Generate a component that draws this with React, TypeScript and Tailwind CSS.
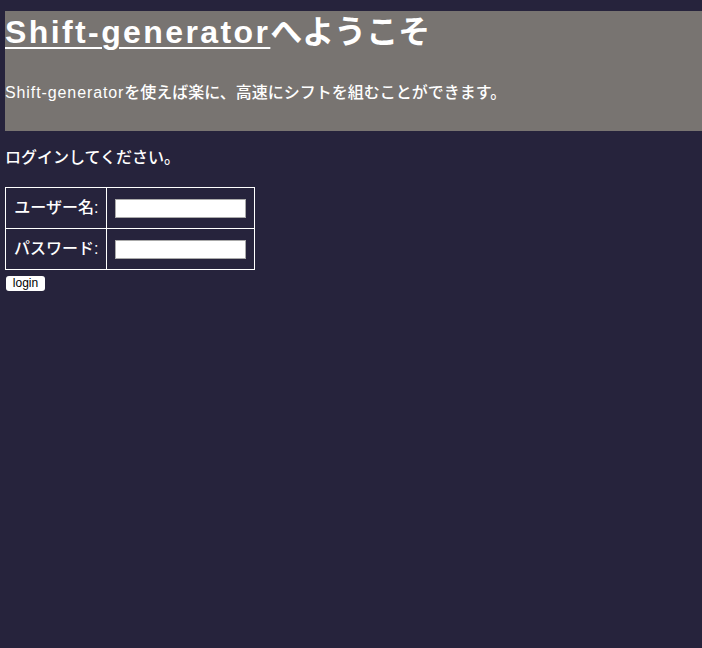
import React from "react";

export default function App() {
  const font = { fontFamily: '"Liberation Sans", "Noto Sans CJK JP", sans-serif' };
  return (
    <div className="min-h-[648px] w-full bg-[#26233c] text-white pt-[11px] px-[5px]" style={font}>
      <div className="bg-[#787471] -mr-[5px] h-[120px] pt-[2px]">
        <h1 className="text-[32px] font-bold leading-[38px] m-0 whitespace-nowrap">
          <a href="#" className="underline decoration-[2px] underline-offset-[4px] tracking-[2.4px]">Shift-generator</a>へようこそ
        </h1>
        <p className="text-[16px] leading-[20px] mt-[32px] font-medium whitespace-nowrap">
          <span className="tracking-[0.9px]">Shift-generator</span>を使えば楽に、高速にシフトを組むことができます。
        </p>
      </div>
      <p className="text-[16px] leading-[20px] mt-[17px] font-medium">ログインしてください。</p>
      <table className="mt-[19px] border-collapse border border-white">
        <tbody>
          <tr className="h-[41px]">
            <td className="border border-white text-right px-[8px] text-[16px] font-medium w-[100px] whitespace-nowrap">ユーザー名:</td>
            <td className="border border-white px-[8px]">
              <input className="bg-white w-[131px] h-[19px] border border-[#aaa] block text-black" />
            </td>
          </tr>
          <tr className="h-[41px]">
            <td className="border border-white text-right px-[8px] text-[16px] font-medium whitespace-nowrap">パスワード:</td>
            <td className="border border-white px-[8px]">
              <input type="password" className="bg-white w-[131px] h-[19px] border border-[#aaa] block text-black" />
            </td>
          </tr>
        </tbody>
      </table>
      <button className="mt-[6px] ml-[1px] bg-white text-black text-[12px] leading-[15px] w-[39px] h-[15px] rounded-[3px]">login</button>
    </div>
  );
}
